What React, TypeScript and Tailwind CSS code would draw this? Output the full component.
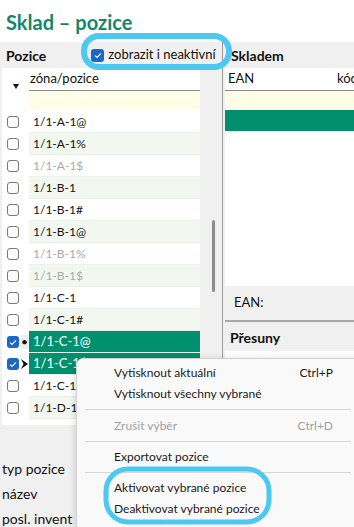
const rows: { t: string; inactive?: boolean; sel?: boolean; mark?: 'dot' | 'arrow' }[] = [
  { t: '1/1-A-1@' },
  { t: '1/1-A-1%' },
  { t: '1/1-A-1$', inactive: true },
  { t: '1/1-B-1' },
  { t: '1/1-B-1#' },
  { t: '1/1-B-1@' },
  { t: '1/1-B-1%', inactive: true },
  { t: '1/1-B-1$', inactive: true },
  { t: '1/1-C-1' },
  { t: '1/1-C-1#' },
  { t: '1/1-C-1@', sel: true, mark: 'dot' },
  { t: '1/1-C-1$', sel: true, mark: 'arrow' },
  { t: '1/1-C-1%' },
  { t: '1/1-D-1' },
];

function Check({ on }: { on?: boolean }) {
  if (on)
    return (
      <div className="flex h-[12px] w-[12px] items-center justify-center rounded-[3px] bg-[#1b66c9]">
        <svg width="8" height="7" viewBox="0 0 8 7">
          <path d="M1 3.6 L3 5.5 L7 1.3" fill="none" stroke="white" strokeWidth="1.1" />
        </svg>
      </div>
    );
  return <div className="h-[12px] w-[12px] rounded-[3px] border border-[#7a7a7a] bg-[#fbfbfb]" />;
}

function MenuItem({ label, keys, dim }: { label: string; keys?: string; dim?: boolean }) {
  return (
    <div className={`flex h-[21px] items-center pl-[37px] pr-[26px] ${dim ? 'text-[#a0a0a0]' : 'text-[#1a1a1a]'}`}>
      <span className="flex-1">{label}</span>
      {keys && <span>{keys}</span>}
    </div>
  );
}

function Sep({ h = 'h-[10px]' }: { h?: string }) {
  return (
    <div className={`flex ${h} items-center px-[8px]`}>
      <div className="h-px w-full bg-[#d6d6d6]" />
    </div>
  );
}

export default function App() {
  return (
    <div className="relative h-[527px] w-[354px] overflow-hidden bg-[#f0f0f0] font-['Lato','Liberation_Sans',sans-serif] text-[13px] text-[#111]">
      <div className="flex h-[42px] items-center bg-white px-[6px] pt-[1px] text-[20px] font-bold text-[#13876a]">Sklad – pozice</div>

      <div className="flex h-[485px] overflow-hidden">
        {/* left */}
        <div className="flex w-[222px] shrink-0 flex-col">
          <div className="flex h-[26px] shrink-0 items-center">
            <span className="ml-[6px] text-[14px] font-bold">Pozice</span>
            <div className="ml-[45px] flex items-center gap-[4px]">
              <div className="flex h-[13px] w-[13px] items-center justify-center rounded-[3px] bg-[#1b66c9]">
                <svg width="8" height="7" viewBox="0 0 8 7">
                  <path d="M1 3.6 L3 5.5 L7 1.3" fill="none" stroke="white" strokeWidth="1.1" />
                </svg>
              </div>
              <span>zobrazit i neaktivní</span>
            </div>
          </div>

          <div className="flex shrink-0">
            <div className="ml-[2px] h-[357px] w-[198px] bg-white">
              <div className="flex h-[23px]">
                <div className="flex w-[27px] items-end justify-center pb-[2px]">
                  <svg width="6" height="5" viewBox="0 0 6 5"><path d="M0 0 H6 L3 5 Z" fill="#111" /></svg>
                </div>
                <div className="flex flex-1 items-center border-b border-[#8a8a8a] pl-[1px]">zóna/pozice</div>
              </div>
              <div className="ml-[27px] h-[18px] bg-[#fffde6]" />
              <div className="mt-[2px] text-[12px]">
                {rows.map((r, i) => (
                  <div key={i} className="flex h-[22px] items-center">
                    <div className="flex w-[18px] justify-end pr-[1px]"><Check on={r.sel} /></div>
                    <div className="flex w-[9px] justify-center">
                      {r.mark === 'dot' && <div className="flex h-[14px] w-[8px] items-center justify-center bg-[#eeeeee] text-[12px] leading-none">•</div>}
                      {r.mark === 'arrow' && (
                        <svg width="7" height="10" viewBox="0 0 7 10"><path d="M0 0 L7 5 L0 10 L2.5 5 Z" fill="#111" /></svg>
                      )}
                    </div>
                    <div
                      className={`flex h-full flex-1 items-center border-b pl-[4px] ${
                        r.sel
                          ? 'border-[#e6f2ec] bg-[#00906d] text-[13px] text-white'
                          : i % 2 === 1
                          ? 'border-[#e9efe8] bg-[#f2f8f0]'
                          : 'border-[#eef2ee] bg-white'
                      } ${r.inactive ? 'text-[#a9a9a9]' : ''}`}
                    >
                      {r.t}
                    </div>
                  </div>
                ))}
              </div>
            </div>
            <div className="flex flex-1 justify-center pt-[152px]">
              <div className="ml-[5px] h-[72px] w-[3px] rounded-full bg-[#8c8c8c]" />
            </div>
          </div>

          <div className="flex flex-col pl-[2px] pt-[31px] text-[14px] leading-[25px]">
            <span>typ pozice</span>
            <span>název</span>
            <span>posl. invent</span>
          </div>
        </div>

        <div className="w-px shrink-0 bg-[#9c9c9c]" />

        {/* right */}
        <div className="flex flex-1 flex-col pl-[2px]">
          <div className="flex h-[26px] shrink-0 items-center pl-[6px] text-[14px] font-bold">Skladem</div>
          <div className="h-[218px] shrink-0 bg-white">
            <div className="flex h-[23px] items-center border-b border-[#8a8a8a] pl-[3px]">
              <span className="flex-1">EAN</span>
              <span className="w-[17px] overflow-hidden whitespace-nowrap">kód</span>
            </div>
            <div className="h-[18px] bg-[#fffde6]" />
            <div className="mt-[1px] h-[21px] bg-[#00906d]" />
          </div>
          <div className="flex h-[36px] shrink-0 items-center border-b-2 border-[#a8a8a8] pl-[9px]">EAN:</div>
          <div className="mt-[1px] flex h-[28px] shrink-0 items-center pl-[5px] text-[14px] font-bold">Přesuny</div>
          <div className="flex-1 bg-white" />
        </div>
      </div>

      {/* context menu */}
      <div className="absolute left-[76px] top-[358px] w-[284px] rounded-tl-[7px] border border-[#d2d2d2] bg-[#f9f9f9] pt-[3px] text-[12px] shadow-[0_2px_8px_rgba(0,0,0,0.18)]">
        <MenuItem label="Vytisknout aktuální" keys="Ctrl+P" />
        <MenuItem label="Vytisknout všechny vybrané" />
        <Sep h="h-[11px]" />
        <MenuItem label="Zrušit výběr" keys="Ctrl+D" dim />
        <Sep />
        <MenuItem label="Exportovat pozice" />
        <Sep />
        <MenuItem label="Aktivovat vybrané pozice" />
        <MenuItem label="Deaktivovat vybrané pozice" />
        <div className="h-[20px]" />
      </div>

      {/* annotations */}
      <svg className="pointer-events-none absolute left-0 top-0" width="354" height="527">
        <rect x="84" y="36" width="145" height="31" rx="15" fill="none" stroke="#4cc8f1" strokeWidth="6" />
        <rect x="106" y="469" width="163" height="53" rx="22" fill="none" stroke="#4cc8f1" strokeWidth="5" />
      </svg>
    </div>
  );
}
